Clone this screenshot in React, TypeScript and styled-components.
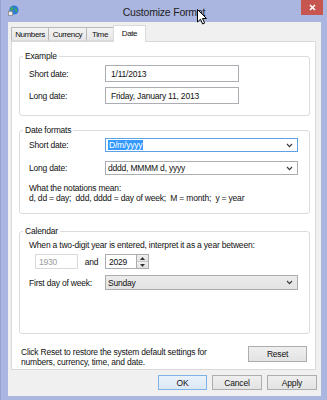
import React from "react";
import styled, { createGlobalStyle } from "styled-components";

const GlobalStyle = createGlobalStyle`
  html, body {
    margin: 0;
    padding: 0;
    background: #fff;
  }
  body {
    font-family: "Liberation Sans", Arial, sans-serif;
  }
`;

const RegionIcon = () => (
  <svg width="11" height="11" viewBox="0 0 11 11">
    <circle cx="6" cy="5" r="4.6" fill="#2d7bd4" />
    <path d="M3.2 2.2 C4.8 1.8 5.8 3 5.2 4.4 C4.4 5.4 3.4 5.8 2.1 5 Z" fill="#49ad4f" />
    <path d="M7.1 3 C8.7 3.4 9.8 5 8.7 7.2 C7.6 7.1 7 5.6 7.1 3 Z" fill="#49ad4f" />
    <rect x="0.5" y="6.3" width="4.2" height="4.2" fill="#ececec" stroke="#7f7f7f" strokeWidth="0.7" />
  </svg>
);

const CloseGlyph = () => (
  <svg width="7" height="7" viewBox="0 0 7 7">
    <path d="M1 1 L6 6 M6 1 L1 6" stroke="#fff" strokeWidth="1.6" />
  </svg>
);

const Chevron = () => (
  <svg width="7" height="5" viewBox="0 0 7 5">
    <path d="M1 1 L3.5 3.6 L6 1" fill="none" stroke="#3c3c3c" strokeWidth="1.2" />
  </svg>
);

const ArrowCursor = () => (
  <svg width="11" height="17" viewBox="0 0 11 17">
    <path
      d="M0.5 0.5 L0.5 13 L3.5 10.2 L5.6 15 L7.6 14.1 L5.5 9.5 L9.5 9.5 Z"
      fill="#fff"
      stroke="#000"
      strokeWidth="1"
    />
  </svg>
);

const SpinArrow: React.FC<{ up?: boolean }> = ({ up }) => (
  <svg width="5" height="3" viewBox="0 0 5 3">
    <path d={up ? "M0 3 L2.5 0 L5 3 Z" : "M0 0 L2.5 3 L5 0 Z"} fill="#333" />
  </svg>
);

export default function App() {
  return (
    <>
      <GlobalStyle />
      <Window>
        <TitleBar>
          <TitleIconCell>
            <RegionIcon />
          </TitleIconCell>
          <TitleText>Customize Format</TitleText>
          <TitleCloseCell>
            <CloseButton>
              <CloseGlyph />
            </CloseButton>
          </TitleCloseCell>
        </TitleBar>

        <Client>
          <TabStrip>
            <Tab $w={38}>Numbers</Tab>
            <Tab $w={39}>Currency</Tab>
            <Tab $w={28}>Time</Tab>
            <Tab $w={33} $active>
              Date
            </Tab>
          </TabStrip>

          <Panel>
            <Group $top={9} $bottom={11}>
              <Legend>Example</Legend>
              <FieldRow>
                <RowLabel>Short date:</RowLabel>
                <TextField $w={134}>1/11/2013</TextField>
              </FieldRow>
              <FieldRow $gap={5}>
                <RowLabel>Long date:</RowLabel>
                <TextField $w={134}>Friday, January 11, 2013</TextField>
              </FieldRow>
            </Group>

            <Group $top={9} $bottom={10} $pt={3}>
              <Legend>Date formats</Legend>
              <FieldRow>
                <RowLabel>Short date:</RowLabel>
                <Combo $focused>
                  <Selected>D/m/yyyy</Selected>
                  <Chevron />
                </Combo>
              </FieldRow>
              <FieldRow $gap={9}>
                <RowLabel>Long date:</RowLabel>
                <Combo>
                  <span>dddd, MMMM d, yyyy</span>
                  <Chevron />
                </Combo>
              </FieldRow>
              <Notes>
                <div>What the notations mean:</div>
                <div>d, dd = day;&nbsp; ddd, dddd = day of week;&nbsp; M = month;&nbsp; y = year</div>
              </Notes>
            </Group>

            <Group $top={12} $bottom={43} $pt={4}>
              <Legend>Calendar</Legend>
              <Sentence>When a two-digit year is entered, interpret it as a year between:</Sentence>
              <YearRow>
                <TextField $w={43} $h={15} $pl={3} $disabled>
                  1930
                </TextField>
                <AndText>and</AndText>
                <TextField $w={32} $h={15} $pl={3}>
                  2029
                </TextField>
                <Spinner>
                  <SpinHalf>
                    <SpinArrow up />
                  </SpinHalf>
                  <SpinHalf>
                    <SpinArrow />
                  </SpinHalf>
                </Spinner>
              </YearRow>
              <FieldRow $gap={6}>
                <RowLabel>First day of week:</RowLabel>
                <Combo $readonly>
                  <span>Sunday</span>
                  <Chevron />
                </Combo>
              </FieldRow>
            </Group>

            <ResetRow>
              <ResetText>
                <div>Click Reset to restore the system default settings for</div>
                <div>numbers, currency, time, and date.</div>
              </ResetText>
              <DialogButton $w={59} $h={16}>
                Reset
              </DialogButton>
            </ResetRow>
          </Panel>

          <ButtonRow>
            <DialogButton $w={49} $default>
              OK
            </DialogButton>
            <DialogButton $w={50}>Cancel</DialogButton>
            <DialogButton $w={50}>Apply</DialogButton>
          </ButtonRow>
        </Client>

        <CursorLayer>
          <ArrowCursor />
        </CursorLayer>
      </Window>
    </>
  );
}

const Window = styled.div`
  position: relative;
  width: 327px;
  height: 400px;
  box-sizing: border-box;
  background: #aab5e0;
  border-left: 1px solid #97a4d3;
  display: flex;
  flex-direction: column;
  font-family: "Liberation Sans", Arial, sans-serif;
  font-size: 8.5px;
  letter-spacing: -0.2px;
  color: #111;
  overflow: hidden;
`;

const TitleBar = styled.div`
  height: 22px;
  flex: none;
  display: grid;
  grid-template-columns: 1fr auto 1fr;
`;

const TitleIconCell = styled.div`
  padding: 5px 0 0 7px;
`;

const TitleText = styled.div`
  font-size: 10.5px;
  letter-spacing: -0.2px;
  line-height: 12px;
  padding-top: 6px;
  color: #1f1f1f;
`;

const TitleCloseCell = styled.div`
  display: flex;
  justify-content: flex-end;
  padding-right: 4px;
`;

const CloseButton = styled.div`
  width: 22px;
  height: 15px;
  background: #c75550;
  display: flex;
  align-items: center;
  justify-content: center;
`;

const Client = styled.div`
  flex: 1;
  margin: 0 6px 4px 7px;
  background: #f0f0f0;
  padding: 0 5px 0 3px;
  display: flex;
  flex-direction: column;
`;

const TabStrip = styled.div`
  height: 19px;
  display: flex;
  align-items: flex-end;
  position: relative;
  z-index: 1;
`;

const Tab = styled.div<{ $w: number; $active?: boolean }>`
  width: ${(p) => p.$w}px;
  height: ${(p) => (p.$active ? 17 : 14)}px;
  box-sizing: border-box;
  margin-right: -1px;
  margin-bottom: ${(p) => (p.$active ? -1 : 0)}px;
  border: 1px solid ${(p) => (p.$active ? "#d9d9d9" : "#b9b9b9")};
  border-bottom: ${(p) => (p.$active ? "none" : "1px solid #d9d9d9")};
  background: ${(p) => (p.$active ? "#fff" : "linear-gradient(#f3f3f3, #e6e6e6)")};
  display: flex;
  align-items: center;
  justify-content: center;
  font-size: 8px;
  letter-spacing: -0.4px;
  padding-bottom: ${(p) => (p.$active ? 1 : 0)}px;
  position: relative;
  z-index: ${(p) => (p.$active ? 2 : 1)};
`;

const Panel = styled.div`
  height: 329px;
  box-sizing: border-box;
  background: #fff;
  border: 1px solid #d9d9d9;
  padding: 0 5px 0 7px;
  display: flex;
  flex-direction: column;
`;

const Group = styled.fieldset<{ $top: number; $bottom: number; $pt?: number }>`
  margin: ${(p) => p.$top}px 0 0 0;
  border: 1px solid #dcdcdc;
  border-radius: 3px;
  padding: ${(p) => p.$pt ?? 4}px 11px ${(p) => p.$bottom}px 9px;
  min-width: 0;
`;

const Legend = styled.legend`
  padding: 0 2px;
  margin-left: -6px;
  line-height: 10px;
`;

const FieldRow = styled.div<{ $gap?: number }>`
  display: flex;
  align-items: center;
  margin-top: ${(p) => p.$gap ?? 0}px;
`;

const RowLabel = styled.div`
  width: 76px;
  flex: none;
`;

const TextField = styled.div<{ $w: number; $h?: number; $pl?: number; $disabled?: boolean }>`
  width: ${(p) => p.$w}px;
  height: ${(p) => p.$h ?? 17}px;
  box-sizing: border-box;
  border: 1px solid ${(p) => (p.$disabled ? "#d9d9d9" : "#abadb3")};
  color: ${(p) => (p.$disabled ? "#9b9b9b" : "#111")};
  background: #fff;
  padding-left: ${(p) => p.$pl ?? 5}px;
  display: flex;
  align-items: center;
  flex: none;
`;

const Combo = styled.div<{ $focused?: boolean; $readonly?: boolean }>`
  width: 193px;
  height: ${(p) => (p.$readonly ? 15 : 14)}px;
  box-sizing: border-box;
  border: 1px solid ${(p) => (p.$focused ? "#5ea2e6" : p.$readonly ? "#acacac" : "#abadb3")};
  background: ${(p) => (p.$readonly ? "linear-gradient(#ececec, #e3e3e3)" : "#fff")};
  padding: 0 4px 0 2px;
  display: flex;
  align-items: center;
  justify-content: space-between;
`;

const Selected = styled.span`
  background: #3399ff;
  color: #fff;
  line-height: 10px;
  padding: 0 1px;
`;

const Notes = styled.div`
  margin-top: 9px;
  line-height: 9.5px;
`;

const Sentence = styled.div`
  line-height: 10px;
`;

const YearRow = styled.div`
  display: flex;
  align-items: center;
  margin-top: 4px;
  padding-left: 6px;
`;

const AndText = styled.div`
  width: 27px;
  text-align: center;
`;

const Spinner = styled.div`
  width: 12px;
  height: 15px;
  box-sizing: border-box;
  border: 1px solid #acacac;
  border-left: none;
  display: flex;
  flex-direction: column;
`;

const SpinHalf = styled.div`
  flex: 1;
  background: linear-gradient(#f0f0f0, #e2e2e2);
  border-bottom: 1px solid #c8c8c8;
  display: flex;
  align-items: center;
  justify-content: center;
  &:last-child {
    border-bottom: none;
  }
`;

const ResetRow = styled.div`
  display: flex;
  justify-content: space-between;
  align-items: flex-start;
  margin-top: 12px;
  padding: 0 3px 0 2px;
`;

const ResetText = styled.div`
  margin-top: 1px;
  line-height: 10px;
`;

const ButtonRow = styled.div`
  display: flex;
  justify-content: flex-end;
  gap: 5px;
  margin: 5px -1px 0 0;
`;

const DialogButton = styled.div<{ $w: number; $h?: number; $default?: boolean }>`
  width: ${(p) => p.$w}px;
  height: ${(p) => p.$h ?? 15}px;
  box-sizing: border-box;
  border: 1px solid ${(p) => (p.$default ? "#7fb3e6" : "#adadad")};
  background: ${(p) => (p.$default ? "linear-gradient(#eaf2fb, #dde8f5)" : "linear-gradient(#efefef, #e3e3e3)")};
  display: flex;
  align-items: center;
  justify-content: center;
  flex: none;
`;

const CursorLayer = styled.div`
  position: absolute;
  left: 196px;
  top: 9px;
  width: 11px;
  height: 17px;
`;
